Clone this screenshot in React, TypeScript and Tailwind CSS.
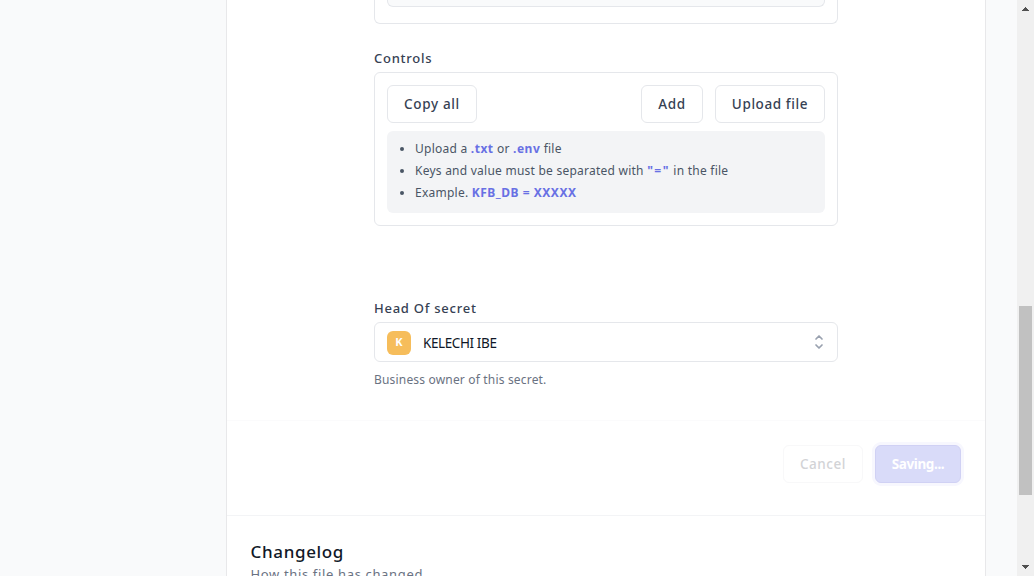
import type { ReactNode } from "react";

function Button({ className, children }: { className: string; children: ReactNode }) {
  return (
    <button
      type="button"
      className={`flex h-[38px] shrink-0 items-center justify-center whitespace-nowrap rounded-md border text-[13.5px] leading-5 ${className}`}
    >
      {children}
    </button>
  );
}

function Key({ className = "tracking-[0.52px]", children }: { className?: string; children: ReactNode }) {
  return <strong className={`font-bold text-[#6870e4] ${className}`}>{children}</strong>;
}

function Scrollbar() {
  return (
    <div className="flex h-full w-[17px] shrink-0 flex-col items-center justify-between bg-[#f0f0f0]">
      <svg className="h-[17px] w-[17px]" viewBox="0 0 17 17" shapeRendering="crispEdges" fill="#505050">
        <path d="M8 7h1v1h1v1h1v1h1v1H5v-1h1V9h1V8h1z" />
      </svg>
      <div className="mt-[289px] h-[189px] w-[13px] bg-[#c1c1c1]" />
      <svg className="mt-auto h-[17px] w-[17px]" viewBox="0 0 17 17" shapeRendering="crispEdges" fill="#505050">
        <path d="M5 6h7v1h-1v1h-1v1H9v1H8V9H7V8H6V7H5z" />
      </svg>
    </div>
  );
}

export default function App() {
  return (
    <div className="flex h-[576px] w-[1034px] overflow-hidden bg-[#f9fafb] font-['Noto_Sans','Open_Sans',sans-serif] text-gray-700">
      <main className="ml-[226px] flex h-full w-[760px] shrink-0 flex-col overflow-hidden border-x border-[#e8e8ea] bg-white">
        <div className="ml-[147px] flex h-[420px] w-[464px] shrink-0 flex-col">
          <div className="h-6 shrink-0 rounded-b-md border border-t-0 border-gray-200 px-3">
            <div className="h-[7px] rounded-b-md border border-t-0 border-gray-200 bg-gray-50" />
          </div>

          <h3 className="mt-6 h-5 shrink-0 text-[13px] font-medium leading-5 tracking-[0.75px]">Controls</h3>
          <section className="mt-1 flex h-[154px] shrink-0 flex-col rounded-md border border-gray-200 p-3">
            <div className="flex">
              <Button className="w-[90px] border-gray-200 font-medium tracking-[0.65px]">Copy all</Button>
              <Button className="ml-auto w-[62px] border-gray-200 font-medium tracking-[0.65px]">Add</Button>
              <Button className="ml-3 w-[110px] border-gray-200 font-medium tracking-[0.6px]">Upload file</Button>
            </div>
            <ul className="mt-2 h-[82px] list-disc rounded-md bg-gray-100 pl-7 pt-[7px] text-[12px] leading-[22px] tracking-[0.24px] text-gray-600">
              <li>
                Upload a <Key>.txt</Key> or <Key>.env</Key> file
              </li>
              <li>
                Keys and value must be separated with <Key className="tracking-[1.5px]">"="</Key> in the file
              </li>
              <li>
                Example. <Key>KFB_DB = XXXXX</Key>
              </li>
            </ul>
          </section>

          <h3 className="mt-[72px] h-5 shrink-0 text-[13px] font-medium leading-5 tracking-[0.75px]">Head Of secret</h3>
          <div className="mt-1 flex h-10 shrink-0 items-center rounded-md border border-gray-200 pl-3 pr-2 pt-px">
            <span className="flex h-6 w-6 items-center justify-center rounded-md bg-[#f6bd5b] text-[11px] font-bold text-white">
              K
            </span>
            <span className="ml-3 text-[13.5px] leading-5 tracking-[-0.4px] text-gray-900">KELECHI IBE</span>
            <svg className="mb-0.5 ml-auto h-5 w-5 text-gray-400" viewBox="0 0 20 20" fill="none" stroke="currentColor" strokeWidth="1.7" strokeLinecap="round" strokeLinejoin="round">
              <path d="M7 7l3-3 3 3m0 6l-3 3-3-3" />
            </svg>
          </div>
          <p className="mt-2 h-5 shrink-0 text-[12px] leading-5 tracking-[0.18px] text-gray-500">Business owner of this secret.</p>
        </div>

        <footer className="flex h-24 shrink-0 justify-end border-y border-b-gray-100 border-t-[#fbfbfc] pr-6 pt-6">
          <Button className="w-[80px] border-[#f8f8f9] font-medium tracking-[0.55px] text-[#d2d3d6]">Cancel</Button>
          <Button className="ml-3 w-[86px] border-[#d0d1f4] bg-[#d9dbf9] font-bold tracking-[-0.4px] text-white ring-3 ring-[#f7f7fe]">Saving...</Button>
        </footer>

        <section className="shrink-0 pl-[23.5px] pt-6">
          <h2 className="text-[17px] font-medium leading-6 tracking-[0.65px] text-gray-900">Changelog</h2>
          <p className="text-[13px] leading-5 tracking-[0.65px] text-gray-500">How this file has changed</p>
        </section>
      </main>
      <div className="ml-[31px]">
        <Scrollbar />
      </div>
    </div>
  );
}
